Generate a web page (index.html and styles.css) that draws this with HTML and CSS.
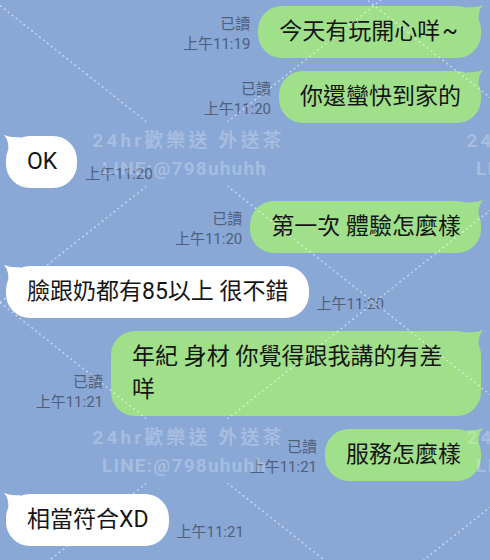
FILE: index.html
```html
<!DOCTYPE html>
<html lang="zh-Hant">
<head>
    <meta charset="UTF-8">
    <meta name="viewport" content="width=device-width, initial-scale=1.0">
    <title>聊天</title>
    <link rel="stylesheet" href="styles.css">
</head>
<body>
    <div class="chat">
        <div class="row out">
            <div class="meta"><span>已讀</span><span>上午11:19</span></div>
            <div class="bubble">今天有玩開心咩<span class="tilde">~</span></div>
        </div>
        <div class="row out">
            <div class="meta"><span>已讀</span><span>上午11:20</span></div>
            <div class="bubble">你還蠻快到家的</div>
        </div>
        <div class="row in">
            <div class="bubble">OK</div>
            <div class="meta"><span>上午11:20</span></div>
        </div>
        <div class="row out">
            <div class="meta"><span>已讀</span><span>上午11:20</span></div>
            <div class="bubble">第一次 體驗怎麼樣</div>
        </div>
        <div class="row in">
            <div class="bubble">臉跟奶都有85以上 很不錯</div>
            <div class="meta"><span>上午11:20</span></div>
        </div>
        <div class="row out">
            <div class="meta"><span>已讀</span><span>上午11:21</span></div>
            <div class="bubble">年紀 身材 你覺得跟我講的有差咩</div>
        </div>
        <div class="row out">
            <div class="meta"><span>已讀</span><span>上午11:21</span></div>
            <div class="bubble">服務怎麼樣</div>
        </div>
        <div class="row in">
            <div class="bubble">相當符合XD</div>
            <div class="meta"><span>上午11:21</span></div>
        </div>
    </div>

    <!-- watermark over the whole screenshot -->
    <svg class="watermark" width="490" height="560" viewBox="0 0 490 560">
        <defs>
            <mask id="holes">
                <rect width="490" height="560" fill="#fff"/>
                <circle cx="187" cy="154" r="52"/>
                <circle cx="561" cy="154" r="52"/>
                <circle cx="187" cy="451" r="52"/>
                <circle cx="561" cy="451" r="52"/>
            </mask>
        </defs>
        <g class="lines" mask="url(#holes)">
            <line x1="0" y1="5.5" x2="490" y2="394.6"/>
            <line x1="0" y1="302.5" x2="490" y2="691.6"/>
            <line x1="0" y1="-291.5" x2="490" y2="97.6"/>
            <line x1="0" y1="302.5" x2="490" y2="-86.6"/>
            <line x1="0" y1="599.5" x2="490" y2="210.4"/>
            <line x1="0" y1="896.5" x2="490" y2="507.4"/>
        </g>
        <g class="mark">
            <text x="187" y="147" textLength="189" lengthAdjust="spacing">24hr歡樂送 外送茶</text>
            <text x="184" y="175" textLength="164" lengthAdjust="spacing">LINE:@798uhuhh</text>
            <text x="561" y="147" textLength="189" lengthAdjust="spacing">24hr歡樂送 外送茶</text>
            <text x="558" y="175" textLength="164" lengthAdjust="spacing">LINE:@798uhuhh</text>
            <text x="187" y="444" textLength="189" lengthAdjust="spacing">24hr歡樂送 外送茶</text>
            <text x="184" y="472" textLength="164" lengthAdjust="spacing">LINE:@798uhuhh</text>
            <text x="561" y="444" textLength="189" lengthAdjust="spacing">24hr歡樂送 外送茶</text>
            <text x="558" y="472" textLength="164" lengthAdjust="spacing">LINE:@798uhuhh</text>
        </g>
    </svg>
</body>
</html>
```

FILE: styles.css
```css
body {
    margin: 0;
    width: 490px;
    height: 560px;
    overflow: hidden;
    position: relative;
    background-color: #89a8d6;
    font-family: Roboto, "Noto Sans CJK TC", sans-serif;
}

.chat {
    display: flex;
    flex-direction: column;
    gap: 13px;
    padding: 6px 9px 0 6px;
}

.row {
    display: flex;
    align-items: flex-end;
    gap: 8px;
}

.row.out {
    justify-content: flex-end;
}

.meta {
    display: flex;
    flex-direction: column;
    align-items: flex-end;
    font-size: 15px;
    line-height: 20px;
    color: #4f5f7c;
    padding-bottom: 4px;
    white-space: nowrap;
}

.bubble {
    position: relative;
    max-width: 370px;
    box-sizing: border-box;
    padding: 9px 20px 10px 21px;
    border-radius: 24px;
    font-size: 23px;
    line-height: 33px;
    color: #151515;
}

.tilde {
    margin-left: 2px;
    margin-right: 3px;
}

.out .bubble {
    background-color: #a0e08b;
}

.in .bubble {
    background-color: #fff;
}

/* little horn at the top corner */
.bubble::before {
    content: "";
    position: absolute;
    top: -1px;
    width: 16px;
    height: 22px;
    background: inherit;
}

.out .bubble::before {
    right: -2px;
    clip-path: path('M16 0 Q10 6 12 22 L0 22 L0 2 Q8 3 16 0 Z');
}

.in .bubble::before {
    left: -2px;
    clip-path: path('M0 0 Q6 6 4 22 L16 22 L16 2 Q8 3 0 0 Z');
}

.watermark {
    position: absolute;
    top: 0;
    left: 0;
    pointer-events: none;
}

.lines line {
    stroke: #fff;
    stroke-width: 1.4;
    stroke-dasharray: 2 3;
    opacity: 0.55;
}

.mark text {
    fill: #fff;
    fill-opacity: 0.26;
    font-family: Roboto, "Noto Sans CJK TC", sans-serif;
    font-weight: 700;
    font-size: 19px;
    text-anchor: middle;
}
```
